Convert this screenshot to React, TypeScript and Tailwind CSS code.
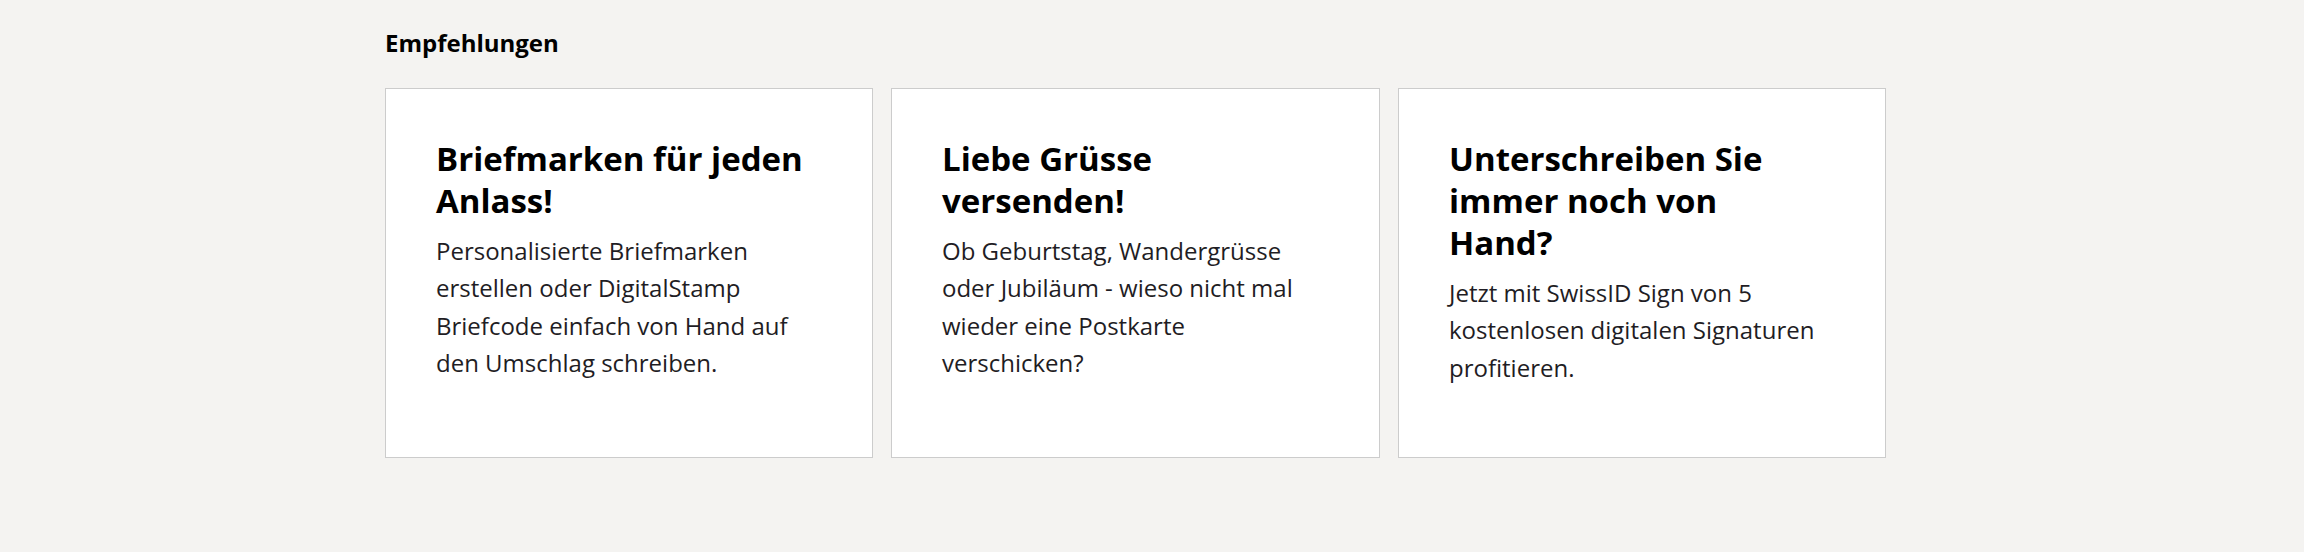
const cards = [
  {
    title: "Briefmarken für jeden Anlass!",
    text: "Personalisierte Briefmarken erstellen oder DigitalStamp Briefcode einfach von Hand auf den Umschlag schreiben.",
  },
  {
    title: "Liebe Grüsse versenden!",
    text: "Ob Geburtstag, Wandergrüsse oder Jubiläum - wieso nicht mal wieder eine Postkarte verschicken?",
  },
  {
    title: "Unterschreiben Sie immer noch von Hand?",
    text: "Jetzt mit SwissID Sign von 5 kostenlosen digitalen Signaturen profitieren.",
  },
];

interface TeaserProps {
  title: string;
  text: string;
}
const Teaser = ({ title, text }: TeaserProps) => (
  <a
    href="#"
    className="block border border-[#cccccc] bg-white pl-[50px] pr-[64px] pt-[49px]"
  >
    <h3 className="text-[33px] font-bold leading-[42px] text-black">{title}</h3>
    <p className="mt-[10px] text-[24px] font-normal leading-[37.4px] text-[#1f1d24]">
      {text}
    </p>
  </a>
);

export default function App() {
  return (
    <div className="min-h-[552px] bg-[#f4f3f1] font-['Open_Sans',sans-serif]">
      <section className="mx-auto w-[1534px] pt-[27px]">
        <h2 className="text-[24px] font-bold leading-[32px] text-black">Empfehlungen</h2>
        <div className="mt-[29px] grid h-[370px] grid-cols-[488px_489px_488px] gap-x-[18px]">
          {cards.map((c) => (
            <Teaser key={c.title} title={c.title} text={c.text} />
          ))}
        </div>
      </section>
    </div>
  );
}
